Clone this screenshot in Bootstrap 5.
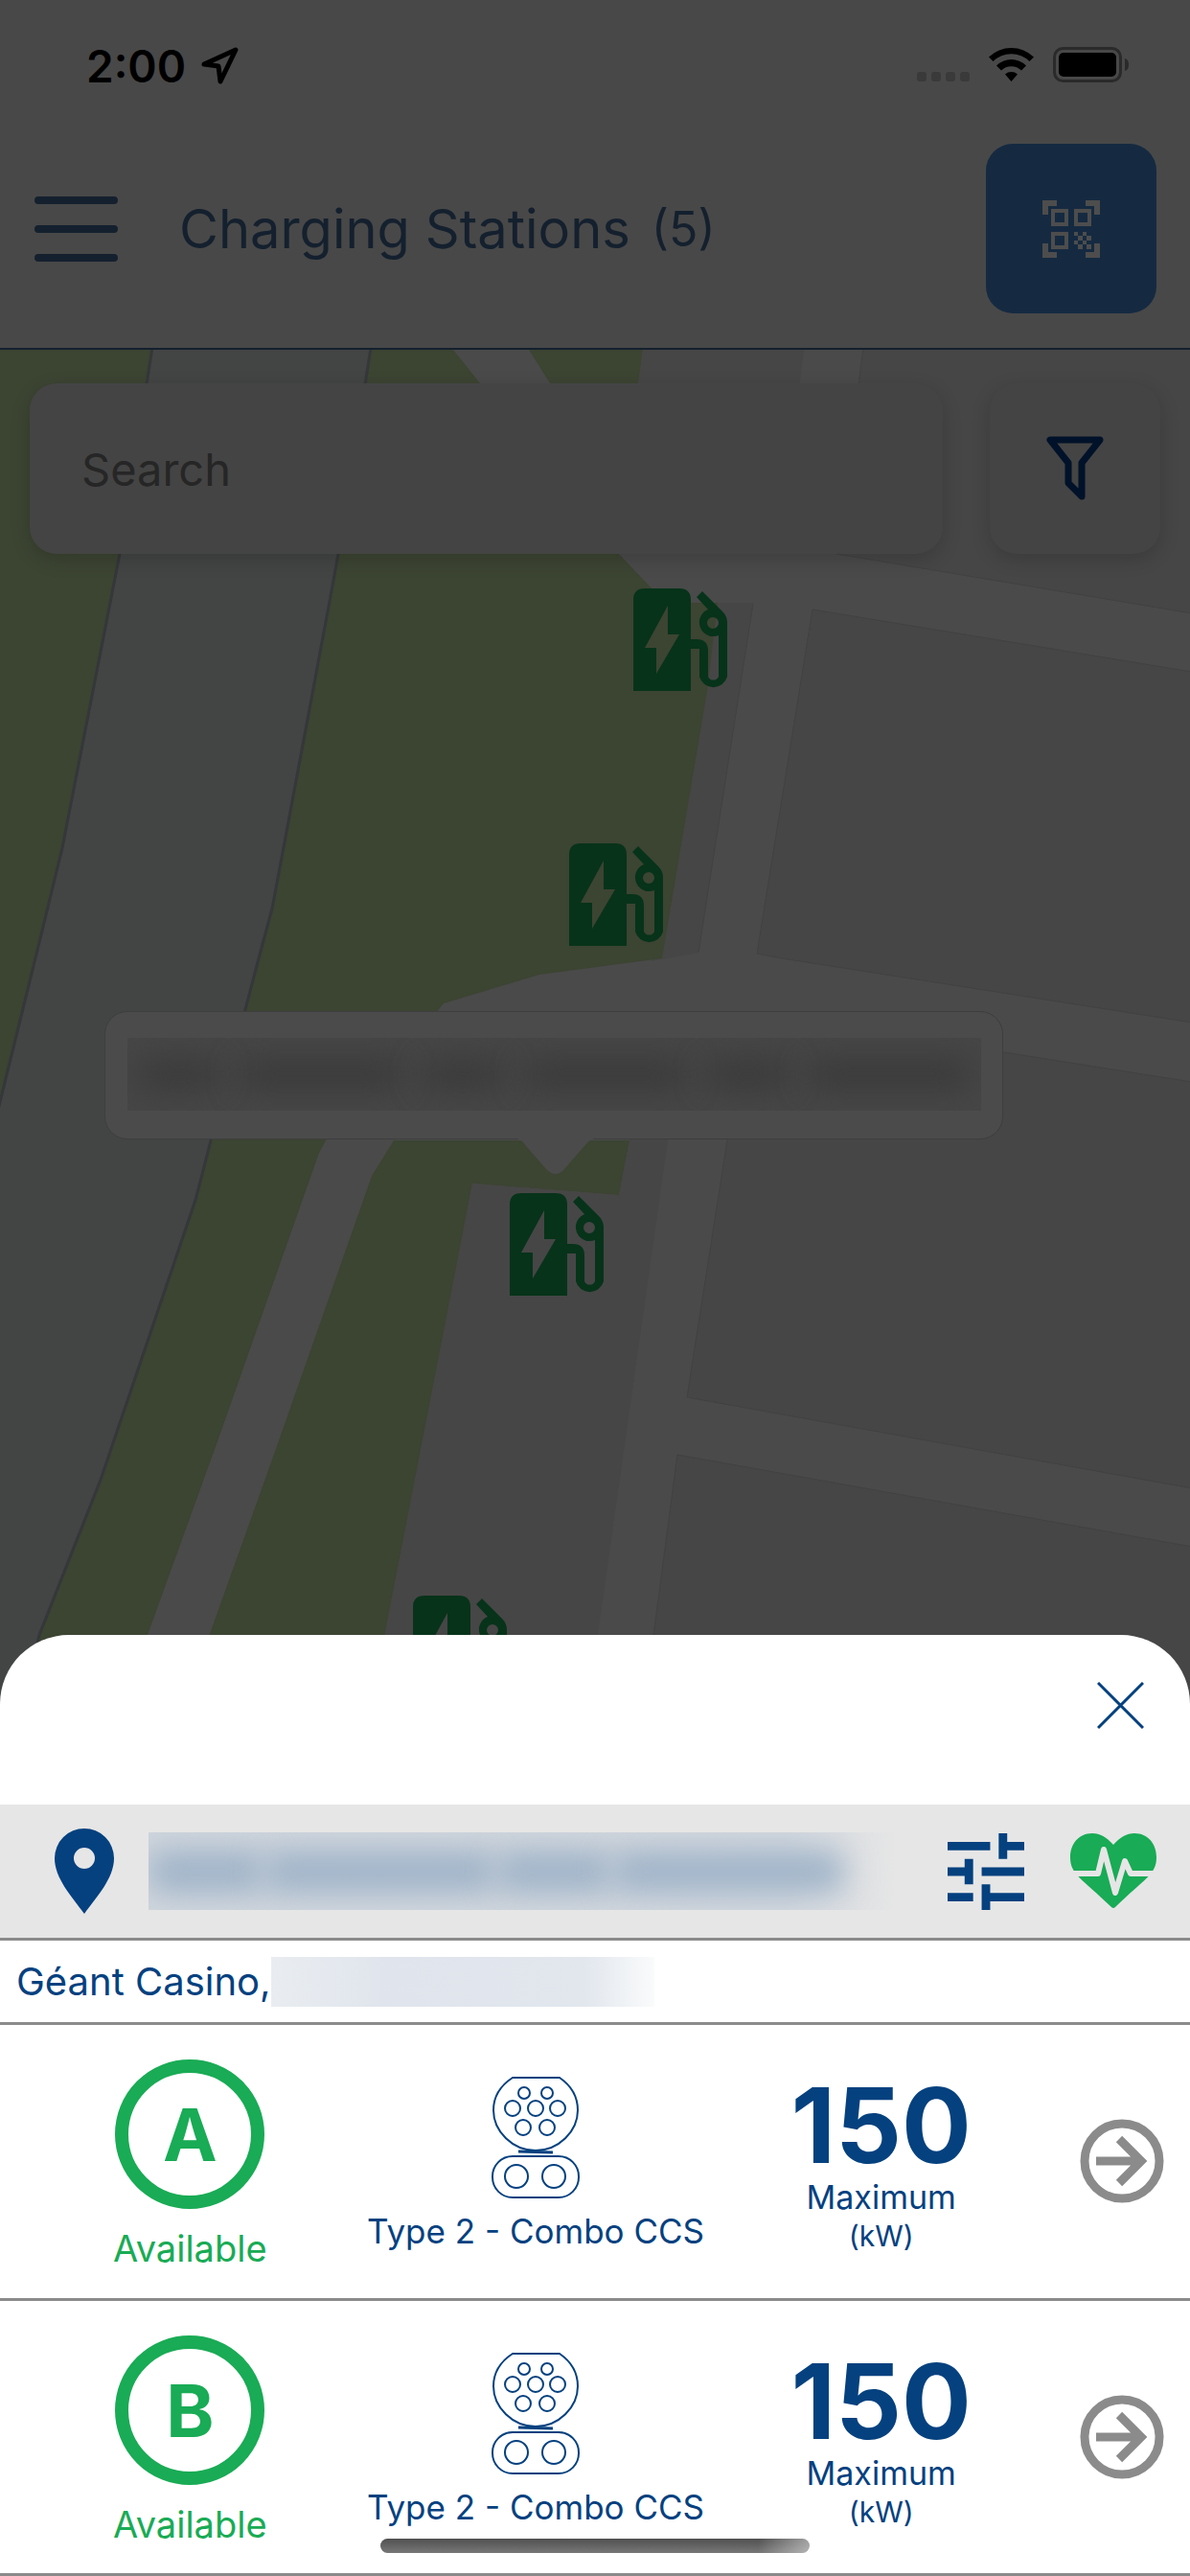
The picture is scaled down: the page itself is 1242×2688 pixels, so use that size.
<!DOCTYPE html>
<html lang="en">
<head>
<meta charset="utf-8">
<meta name="viewport" content="width=device-width, initial-scale=1">
<title>Charging Stations</title>
<link href="https://cdn.jsdelivr.net/npm/bootstrap@5.3.0/dist/css/bootstrap.min.css" rel="stylesheet">
<style>
:root{--navy:#05417f;--avail:#19ab55;--rule:#8b8b8b;--dim:#484848}
body{font-family:Inter,"Liberation Sans",sans-serif;background:var(--dim);color:var(--navy);line-height:1}
button{border:0;background:none;padding:0;color:inherit;line-height:1}
svg{display:block;flex:none}
.app-head{border-bottom:2px solid #14202e;color:#14202e}
.status-row{padding:42px 64px 0 90px;height:112px;color:#000;font-size:46px;font-weight:600;line-height:54px}
.title-row{padding:38px 35px 36px 36px}
.app-title{font-size:56px;line-height:76px;font-weight:400;margin:0 0 0 64px}
.app-count{font-size:50px;line-height:76px;margin-left:22px}
.scan-btn{width:178px;height:177px;border-radius:28px;background:#152a41;color:#4d4d4d}
.map-pane{background:#4a4a4a}
.map-art{top:0;left:0;width:100%;height:100%}
.search-row{padding:35px 31px 0;gap:49px}
.search-row input{height:178px;border:0;border-radius:28px;background:#444;padding:0 54px;font-size:47px;color:#262626;box-shadow:0 6px 20px rgba(0,0,0,.16)}
.search-row input::placeholder{color:#262626;opacity:1}
.search-row input:focus{background:#444}
.filter-btn{width:178px;height:178px;border-radius:28px;background:#444;box-shadow:0 6px 20px rgba(0,0,0,.16);color:#001229}
.station{position:absolute;color:#07331a}
.st-1{left:661px;top:249px}.st-2{left:594px;top:515px}.st-3{left:532px;top:880px}.st-4{left:431px;top:1300px}
.callout{left:109px;top:690px;width:938px;height:134px;border-radius:24px;background:#4b4b4b;border:1px solid #3e3e3e;padding:27px 22px 29px 23px}
.callout-tip{left:427px;top:131px}
.hidden-name,.hidden-site,.hidden-addr{overflow:hidden}
.hidden-name{height:76px;background:#464646}
.smudge{display:flex;height:100%;align-items:center;justify-content:space-around}
.smudge i{flex:1;margin:0 10px;height:28px;border-radius:14px;background:#393939;filter:blur(16px)}
.smudge i:nth-child(even){flex-grow:2}
.sheet{margin-top:-80px;background:#fff;border-radius:72px 72px 0 0;height:982px}
.sheet-top{height:177px;padding:49px 48px 0 0}
.site-bar{height:142px;background:#e6e6e6;border-bottom:3px solid var(--rule);padding:0 35px 0 57px}
.hidden-site{height:81px;margin:0 52px 0 36px;background:linear-gradient(90deg,#d0d6dd,#d3d8de 85%,#e6e6e6)}
.hidden-site .smudge{padding-right:56px}
.hidden-site .smudge i{height:44px;margin:0;background:#9fb3c8;filter:blur(16px)}
.addr-row{height:88px;border-bottom:3px solid var(--rule);padding-left:17px;font-size:40px;line-height:52px}
.hidden-addr{width:400px;height:52px;background:linear-gradient(90deg,#e9edf1,#e0e5ed 30%,#e2e7ee 82%,#fafbfb)}
.conn-row{border-bottom:3px solid var(--rule);padding-left:18px}
.conn-cell{flex:1 1 0;white-space:nowrap}
.conn-id{width:156px;height:156px;border:14px solid var(--avail);border-radius:50%;font-size:76px;font-weight:700;margin-top:36px}
.avail{color:var(--avail)}
.conn-state{font-size:38px;line-height:44px;margin-top:19px}
.conn-plug{margin-top:53px}
.conn-type{font-size:35px;line-height:40px;margin-top:14px}
.conn-power{font-size:108px;line-height:104px;font-weight:700;margin-top:53px}
.conn-unit{font-size:34px;line-height:40px;margin-top:3px}
.conn-kw{font-size:30px;line-height:40px}
.conn-go{width:142px}
.home-bar{left:32%;right:32%;bottom:24px;height:15px;border-radius:8px;background:linear-gradient(90deg,transparent 88%,rgba(255,255,255,.45)),linear-gradient(#505050,#777)}
</style>
<script src="https://cdn.jsdelivr.net/npm/bootstrap@5.3.0/dist/js/bootstrap.bundle.min.js"></script>
</head>
<body class="min-vh-100 d-flex flex-column">
<svg width="0" height="0" class="position-absolute" aria-hidden="true">
  <symbol id="charger" viewBox="0 0 98 107">
    <path fill-rule="evenodd" d="M12 0H48Q60 0 60 12V107H0V12Q0 0 12 0ZM36 18L12 62H24V89L48 48H36Z"/>
    <path fill-rule="evenodd" d="M66 9L72 3L93 24Q98 29 98 36V92A15 15 0 0 1 69 92V63H60V53H66Q78 53 78 65V92A6 6 0 0 0 89 92V49A14 14 0 1 1 78 22ZM83 30A6 6 0 1 0 83 42A6 6 0 1 0 83 30Z"/>
  </symbol>
  <symbol id="combo" viewBox="0 0 92 128">
    <g fill="none" stroke="currentColor" stroke-width="2">
      <path d="M22 2H71Q90 15 90 36C90 58 70 78 46 78S2 58 2 36Q2 15 22 2Z"/>
      <circle cx="34" cy="18" r="6"/><circle cx="58" cy="18" r="6"/>
      <circle cx="22" cy="34" r="8"/><circle cx="46" cy="34" r="8"/><circle cx="69" cy="34" r="8"/>
      <circle cx="33" cy="54" r="8"/><circle cx="58" cy="54" r="8"/>
      <path d="M28 79L64 80" stroke-width="3"/>
      <rect x="1" y="84" width="90" height="43" rx="21"/>
      <circle cx="26" cy="105" r="12"/><circle cx="65" cy="105" r="12"/>
    </g>
  </symbol>
  <symbol id="go" viewBox="0 0 88 88">
    <circle cx="44" cy="44" r="39" fill="none" stroke="currentColor" stroke-width="9"/>
    <path d="M17 44H65M41 21L64 44L41 67" fill="none" stroke="currentColor" stroke-width="9"/>
  </symbol>
</svg>

<header class="app-head">
  <div class="status-row d-flex">
    <span>2:00</span>
    <svg class="ms-3" width="40" height="54" viewBox="0 0 40 54"><path d="M3 25L36 10L20 43L18 27Z" fill="none" stroke="#000" stroke-width="5" stroke-linejoin="round"/></svg>
    <svg class="ms-auto" width="221" height="54" viewBox="0 0 221 54">
      <g fill="#3a3a3a"><rect y="33" width="10" height="10" rx="3"/><rect x="15" y="33" width="10" height="10" rx="3"/><rect x="30" y="33" width="10" height="10" rx="3"/><rect x="45" y="33" width="10" height="10" rx="3"/></g>
      <path d="M75 17.500A34 34 0 0 1 122 17.500L117.500 22A27 27 0 0 0 79.500 22ZM83 26.500A22 22 0 0 1 114 26.500L109 31.500A15 15 0 0 0 88 31.500ZM92 35.500A10 10 0 0 1 105 35.500L98.500 43Z"/>
      <rect x="143.500" y="8.500" width="69" height="34" rx="9" fill="none" stroke="#2a2a2a" stroke-width="3"/>
      <rect x="148" y="13" width="60" height="25" rx="5"/>
      <path d="M217 19Q221 20 221 25.500T217 32Z" fill="#2a2a2a"/>
    </svg>
  </div>
  <div class="title-row d-flex align-items-center">
    <button type="button" aria-label="Menu"><svg width="87" height="68" viewBox="0 0 87 68" stroke="currentColor" stroke-width="8" stroke-linecap="round"><path d="M4 4H83M4 34H83M4 64H83"/></svg></button>
    <h1 class="app-title">Charging Stations</h1><span class="app-count">(5)</span>
    <button type="button" class="scan-btn ms-auto d-flex align-items-center justify-content-center" aria-label="Scan code">
      <svg width="60" height="60" viewBox="0 0 60 60" fill="none" stroke="currentColor">
        <path stroke-width="6" d="M3 15V3H15M45 3H57V15M57 45V57H45M15 57H3V45"/>
        <path stroke-width="4" d="M11 11H25V25H11ZM35 11H49V25H35ZM11 35H25V49H11Z"/>
        <path stroke="none" fill="currentColor" d="M33 33h4v4h-4zM42 33h4v4h-4zM37 37h5v5h-5zM46 37h5v5h-5zM33 42h4v4h-4zM42 42h4v4h-4zM37 46h5v5h-5zM46 46h5v5h-5z"/>
      </svg>
    </button>
  </div>
</header>

<main class="map-pane flex-fill position-relative overflow-hidden">
  <svg class="map-art position-absolute" viewBox="0 365 1242 1421" preserveAspectRatio="xMinYMin slice" aria-hidden="true">
    <path fill="#464646" d="M722 629H786L729 994L680 1003Z"/>
    <g fill="#3c4432">
      <path d="M0 365H473L501 400L646 578L681 615L722 629H749L738 721L691 1000L563 1017L463 1047L411 1110L340 1190L333 1203L226 1507L120 1800H0Z"/>
      <path d="M552 365H671L650 520Z"/>
      <path d="M411 1190L388 1227L284 1523L190 1786H388L493 1235L646 1247L657 1190Z"/>
    </g>
    <path fill="#434545" stroke="#35373a" stroke-width="3" d="M159 363L125 578L65 885L37 1000L-2 1158V1790H20L41 1706L105 1544L204 1252L220 1190L270 1000L284 948L342 638L353 578L387 363Z"/>
    <g fill="#464646" stroke="#424242" stroke-width="1">
      <path stroke="none" d="M671 365H839L815 560L650 520Z"/>
      <path d="M901 363L873 578L1244 640V363Z"/>
      <path d="M786 630L729 994"/>
      <path d="M848 636L1244 701V1067L816 1000L790 995Z"/>
      <path d="M769 1056L1048 1098L1244 1129V1553L717 1458L759 1190Z"/>
      <path d="M707 1518L1244 1614V1790H671Z"/>
      <path stroke="none" d="M493 1235L646 1247L657 1190L668 1060L709 1057L697 1190L612 1790H385Z"/>
    </g>
  </svg>
  <div class="search-row d-flex position-relative">
    <input type="search" class="form-control" placeholder="Search" aria-label="Search">
    <button type="button" class="filter-btn flex-shrink-0 d-flex align-items-center justify-content-center" aria-label="Filter">
      <svg width="60" height="68" viewBox="0 0 60 68" fill="none" stroke="currentColor" stroke-width="7" stroke-linejoin="round"><path d="M4 4H56L37 28V63L23 49V28Z"/></svg>
    </button>
  </div>
  <button type="button" class="station st-1" aria-label="Station 1"><svg width="98" height="107" fill="currentColor"><use href="#charger"/></svg></button>
  <button type="button" class="station st-2" aria-label="Station 2"><svg width="98" height="107" fill="currentColor"><use href="#charger"/></svg></button>
  <button type="button" class="station st-3" aria-label="Station 3"><svg width="98" height="107" fill="currentColor"><use href="#charger"/></svg></button>
  <button type="button" class="station st-4" aria-label="Station 4"><svg width="98" height="107" fill="currentColor"><use href="#charger"/></svg></button>
  <div class="callout position-absolute">
    <div class="hidden-name"><div class="smudge"><i></i><i></i><i></i><i></i><i></i><i></i></div></div>
    <svg class="callout-tip position-absolute" width="86" height="40" viewBox="0 0 86 40"><path fill="#4b4b4b" d="M0 0Q8 2 13 10L34 34Q43 42 51 34L72 10Q78 2 86 0Z"/></svg>
  </div>
</main>

<section class="sheet position-relative d-flex flex-column overflow-hidden">
  <div class="sheet-top d-flex justify-content-end align-items-start">
    <button type="button" aria-label="Close"><svg width="49" height="49" viewBox="0 0 49 49" stroke="currentColor" stroke-width="3"><path d="M1 1L48 48M48 1L1 48"/></svg></button>
  </div>
  <div class="site-bar d-flex align-items-center">
    <svg width="62" height="89" viewBox="0 0 62 89" fill="currentColor"><path fill-rule="evenodd" d="M31 0A31 31 0 0 1 62 31C62 52 44 71 31 89C18 71 0 52 0 31A31 31 0 0 1 31 0ZM31 20A11 11 0 1 0 31 42A11 11 0 1 0 31 20Z"/></svg>
    <div class="hidden-site flex-fill"><div class="smudge"><i></i><i></i><i></i><i></i></div></div>
    <button type="button" aria-label="Settings"><svg width="80" height="80" viewBox="3 3 18 18" fill="currentColor"><path d="M3 17v2h6v-2H3zM3 5v2h10V5H3zm10 16v-2h8v-2h-8v-2h-2v6h2zM7 9v2H3v2h4v2h2V9H7zm14 4v-2H11v2h10zm-6-4h2V7h4V5h-4V3h-2v6z"/></svg></button>
    <button type="button" class="avail ms-5" aria-label="Health"><svg width="90" height="79" viewBox="0 0 90 79">
      <path fill="currentColor" d="M45 12C52 4 59 0 67 0C81 0 90 11 90 25C90 43 78 47 47 77Q45 79 43 77C12 47 0 43 0 25C0 11 9 0 23 0C31 0 38 4 45 12Z"/>
      <path d="M0 42H29L35 17L47 62L57 29L63 42H90" fill="none" stroke="#e6e6e6" stroke-width="6" stroke-linejoin="round"/></svg></button>
  </div>
  <div class="addr-row d-flex align-items-center"><span>Géant Casino,</span><span class="hidden-addr"></span></div>
  <div class="conn-row flex-fill d-flex">
    <div class="conn-cell avail d-flex flex-column align-items-center"><div class="conn-id d-flex align-items-center justify-content-center">A</div><div class="conn-state">Available</div></div>
    <div class="conn-cell d-flex flex-column align-items-center"><svg class="conn-plug" width="92" height="128"><use href="#combo"/></svg><div class="conn-type">Type 2 - Combo CCS</div></div>
    <div class="conn-cell d-flex flex-column align-items-center"><div class="conn-power">150</div><div class="conn-unit">Maximum</div><div class="conn-kw">(kW)</div></div>
    <button type="button" class="conn-go d-flex align-items-center justify-content-center" aria-label="Open connector A"><svg width="88" height="88" color="#8b8b8b"><use href="#go"/></svg></button>
  </div>
  <div class="conn-row flex-fill d-flex">
    <div class="conn-cell avail d-flex flex-column align-items-center"><div class="conn-id d-flex align-items-center justify-content-center">B</div><div class="conn-state">Available</div></div>
    <div class="conn-cell d-flex flex-column align-items-center"><svg class="conn-plug" width="92" height="128"><use href="#combo"/></svg><div class="conn-type">Type 2 - Combo CCS</div></div>
    <div class="conn-cell d-flex flex-column align-items-center"><div class="conn-power">150</div><div class="conn-unit">Maximum</div><div class="conn-kw">(kW)</div></div>
    <button type="button" class="conn-go d-flex align-items-center justify-content-center" aria-label="Open connector B"><svg width="88" height="88" color="#8b8b8b"><use href="#go"/></svg></button>
  </div>
  <div class="home-bar position-absolute"></div>
</section>
</body>
</html>
